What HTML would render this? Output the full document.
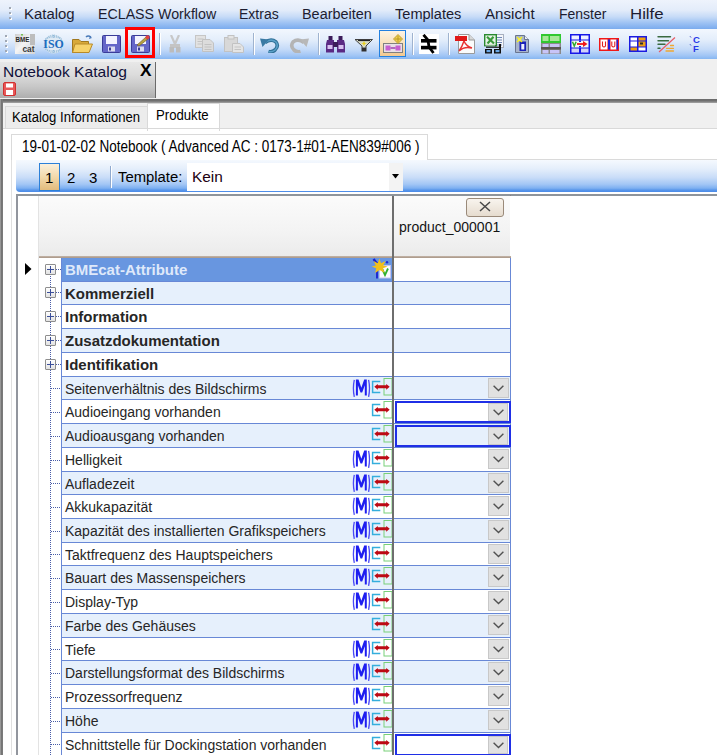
<!DOCTYPE html>
<html><head><meta charset="utf-8"><style>
html,body{margin:0;padding:0}
body{width:717px;height:755px;overflow:hidden;position:relative;background:#fff;font-family:"Liberation Sans",sans-serif;color:#000}
.a{position:absolute}
#menubar{position:absolute;left:0;top:0;width:717px;height:29px;background:linear-gradient(#eef3fc 0%,#e3ecfa 35%,#c6dbf7 58%,#9cc1f3 80%,#7aabee 100%)}
#toolbar{position:absolute;left:0;top:29px;width:717px;height:30px;background:linear-gradient(#f2f7fe 0%,#e4eefb 35%,#c4daf8 68%,#a2c6f5 88%,#86b6f2 100%)}
.mi{position:absolute;top:6px;transform-origin:0 0;font-size:14px;color:#1c1c30;white-space:nowrap;line-height:17px}
.grip{position:absolute;width:2px;height:2px;background:#a0a8b4;box-shadow:1px 1px 0 #fff}
.sep{position:absolute;top:33px;width:1px;height:22px;background:#9fb3cf;box-shadow:1px 0 0 #fff}
.ic{position:absolute}
#docstrip{position:absolute;left:0;top:59px;width:717px;height:40px;background:#f0f0f0}
#doctab{position:absolute;left:0;top:62px;width:155px;height:36px;background:linear-gradient(#e8e8e8 0%,#dcdcdc 35%,#c6c6c6 70%,#aeaeae 100%);border-right:1px solid #6a6a6a}
#darkline{position:absolute;left:0;top:99px;width:717px;height:4px;background:linear-gradient(#6a6a6a,#707070 45%,#8c8c8c 75%,#a8a8a8)}
#leftborder{position:absolute;left:0;top:99px;width:3px;height:656px;background:linear-gradient(90deg,#a8a8a8,#707070 55%,#808080)}
#tabstrip{position:absolute;left:3px;top:103px;width:714px;height:26px;background:#f0f0f0}
#tab1{position:absolute;left:5px;top:106px;width:141px;height:22px;background:#ececec;border:1px solid #d9d9d9;border-bottom:none}
#tab2{position:absolute;left:147px;top:103px;width:71px;height:27px;background:#fff;border:1px solid #d9d9d9;border-bottom:none}
#pageline{position:absolute;left:3px;top:128px;width:714px;height:1px;background:#d9d9d9}
.tt{position:absolute;font-size:14px;white-space:nowrap;line-height:16px;transform-origin:0 0}
#innerv{position:absolute;left:11px;top:134px;width:1px;height:621px;background:#e0e0e0}
#innertab{position:absolute;left:11px;top:134px;width:415px;height:25px;border:1px solid #dadada;border-bottom:none;background:#fff}
#innerline{position:absolute;left:427px;top:159px;width:290px;height:1px;background:#dadada}
#tb2{position:absolute;left:16px;top:160px;width:701px;height:32px;border-bottom-left-radius:4px;background:linear-gradient(#f5f9fe 0%,#e4eefb 28%,#c8dcf8 55%,#a2c6f5 76%,#7eb0f1 88%,#5896ea 94%,#4a8ae8 100%)}
#btn1{position:absolute;left:39px;top:163px;width:19px;height:26px;border:1.5px solid #2c80d8;background:linear-gradient(#fbf0dc,#f2d9aa 50%,#e2bb7c)}
#combo{position:absolute;left:187px;top:163px;width:216px;height:28px;background:#fff}
#combobtn{position:absolute;left:389px;top:163px;width:14px;height:28px;background:#f3f3f3}
#gridborder{position:absolute;left:16px;top:194px;width:701px;height:561px;border-left:2px solid #92969e;border-top:2px solid #8e949b;box-sizing:border-box}
#rhcol{position:absolute;left:18px;top:196px;width:20px;height:559px;background:#fff;border-right:1px solid #e3e3e3}
#hdr1{position:absolute;left:39px;top:196px;width:353px;height:60px;background:linear-gradient(#fbfbfb,#f3f3f3 60%,#ebebeb)}
#hdr2{position:absolute;left:394px;top:196px;width:116px;height:60px;background:linear-gradient(#fbfbfb,#f3f3f3 60%,#ebebeb)}
#hdrline{position:absolute;left:39px;top:256px;width:472px;height:2px;background:linear-gradient(#c4b6aa,#a89585)}
#closebtn{position:absolute;left:466px;top:198px;width:36px;height:17px;border:1px solid #9a8a7a;border-radius:3px;background:linear-gradient(#f8f4ee,#e6dccf)}
.row{position:absolute;left:0;width:717px}
.pbox{position:absolute;left:45px;width:9px;height:9px;border:1px solid #8e8e8e;border-radius:1px;background:linear-gradient(#ffffff,#e2e2e2)}
.pbox:before{content:"";position:absolute;left:1px;top:4px;width:7px;height:1px;background:#3b4f9a}
.pbox:after{content:"";position:absolute;left:4px;top:1px;width:1px;height:7px;background:#3b4f9a}
.hdot{position:absolute;left:56px;width:5px;height:1px;background:repeating-linear-gradient(90deg,#4a5da8 0 1px,transparent 1px 2px)}
.hdot2{position:absolute;left:51px;width:10px;height:1px;background:repeating-linear-gradient(90deg,#4a5da8 0 1px,transparent 1px 2px)}
.treev{position:absolute;left:50px;width:1px;background:repeating-linear-gradient(#4a5da8 0 1px,transparent 1px 2px)}
.lc{position:absolute;left:61px;top:0;width:331px;height:100%;box-sizing:border-box;border-left:1px solid #6888d6;border-bottom:1px solid #6888d6}
.vc{position:absolute;left:394px;top:0;width:117px;height:100%;box-sizing:border-box;border-right:1px solid #6888d6;border-bottom:1px solid #6888d6}
.lab{position:absolute;left:3px;top:3.5px;font-size:14px;line-height:17px;white-space:nowrap;color:#262626}
.lab.b{font-weight:bold;font-size:14px;top:4px;transform:scaleX(1.07);transform-origin:0 0}
.divider{position:absolute;left:392px;top:196px;width:2px;height:559px;background:#6e6e6e}
.micon{position:absolute;left:290px;top:3px;width:19px;height:16px;color:#1a1aff;font-weight:bold;font-size:14px;line-height:16px;text-align:center}
.cyb{position:absolute;left:310px;top:4px;width:7px;height:9px;border:1.5px solid #2ba0d8;border-right:none}
.grb{position:absolute;left:321px;top:1px;width:7px;height:15px;border:1px solid #58c050;border-left:none}
.arr{position:absolute;left:312px;top:6px;width:15px;height:4px;background:#c8102e}
.ddb{position:absolute;left:94px;top:1px;width:21px;height:20px;box-sizing:border-box;border:1px solid #c8c8c8;background:#e1e1e1;display:flex;align-items:center;justify-content:center}
.combo{position:absolute;left:1px;top:1px;width:116px;height:22px;box-sizing:border-box;border:2px solid #1f2fe6;background:transparent}
.bmeicon{position:absolute;left:301px;top:2px;width:24px;height:20px}

.icg{position:absolute;left:290px;top:0}

</style></head><body>
<div id="menubar"></div>
<div id="toolbar"></div>
<div class="grip" style="left:9px;top:7px"></div><div class="grip" style="left:9px;top:12px"></div><div class="grip" style="left:9px;top:17px"></div>
<div class="mi" style="left:24px;transform:scaleX(1.066)">Katalog</div>
<div class="mi" style="left:98px;transform:scaleX(1.015)">ECLASS Workflow</div>
<div class="mi" style="left:239px">Extras</div>
<div class="mi" style="left:302px;transform:scaleX(1.03)">Bearbeiten</div>
<div class="mi" style="left:395px;transform:scaleX(1.04)">Templates</div>
<div class="mi" style="left:485px;transform:scaleX(1.08)">Ansicht</div>
<div class="mi" style="left:559px">Fenster</div>
<div class="mi" style="left:630px;transform:scaleX(1.2)">Hilfe</div>
<div class="grip" style="left:5px;top:35px"></div><div class="grip" style="left:5px;top:40px"></div><div class="grip" style="left:5px;top:45px"></div><div class="grip" style="left:5px;top:50px"></div>
<div id="docstrip"></div>
<div id="doctab"></div>
<div class="tt" style="left:3px;top:63px;font-size:15px;line-height:17px;color:#10103a;transform:scaleX(1.04)">Notebook Katalog</div>
<div class="tt" style="left:140px;top:62px;font-size:16px;font-weight:bold;line-height:18px;transform:scaleX(1.08)">X</div>
<div id="darkline"></div>
<div id="leftborder"></div>
<div id="tabstrip"></div>
<div id="tab1"></div>
<div id="tab2"></div>
<div id="pageline"></div>
<div class="tt" style="left:12px;top:109px;transform:scaleX(0.935)">Katalog Informationen</div>
<div class="tt" style="left:156px;top:107px;transform:scaleX(0.94)">Produkte</div>
<div id="innerv"></div>
<div id="innertab"></div>
<div id="innerline"></div>
<div class="tt" style="left:22px;top:138px;font-size:16px;line-height:18px;transform:scaleX(0.845)">19-01-02-02 Notebook ( Advanced AC : 0173-1#01-AEN839#006 )</div>
<div id="tb2"></div>
<div id="btn1"></div>
<div class="tt" style="left:45px;top:169px;font-size:15px;line-height:17px">1</div>
<div class="tt" style="left:67px;top:169px;font-size:15px;line-height:17px">2</div>
<div class="tt" style="left:89px;top:169px;font-size:15px;line-height:17px">3</div>
<div class="a" style="left:110px;top:166px;width:1px;height:22px;background:#8fa9cf;box-shadow:1px 0 0 #fff"></div>
<div class="tt" style="left:118px;top:169px;font-size:14px;transform:scaleX(1.06)">Template:</div>
<div id="combo"></div>
<div id="combobtn"></div>
<div class="tt" style="left:192px;top:169px;font-size:14px;color:#200010;transform:scaleX(1.1)">Kein</div>
<svg class="a" style="left:392px;top:174px" width="8" height="5"><path d="M0 0H7L3.5 4.5Z" fill="#000"/></svg>
<div id="gridborder"></div>
<div id="rhcol"></div>
<div id="hdr1"></div>
<div id="hdr2"></div>
<div id="hdrline"></div>
<div id="closebtn"></div>
<svg class="a" style="left:479px;top:201px" width="12" height="11"><path d="M1 1L11 10M11 1L1 10" stroke="#484848" stroke-width="1.5"/></svg><div class="a" style="left:510px;top:195px;width:1px;height:1px;background:#8a8080"></div>
<div class="tt" style="left:399px;top:219px;font-size:14px;color:#141414">product_000001</div>
<svg class="a" style="left:25px;top:263px" width="7" height="12"><path d="M0 0L6.5 6L0 12Z" fill="#000"/></svg>
<!-- BMEcat -->
<svg class="a" style="left:15px;top:34px" width="20" height="20" viewBox="0 0 20 20">
<defs><linearGradient id="bmeg" x1="0" y1="0" x2="1" y2="1"><stop offset="0" stop-color="#cfcfcf"/><stop offset="0.45" stop-color="#f4f4f4"/><stop offset="1" stop-color="#d4d4d4"/></linearGradient></defs>
<rect x="0" y="0" width="20" height="20" fill="url(#bmeg)"/>
<rect x="15" y="0" width="5" height="11" fill="#bdbdbd"/>
<text x="0.5" y="7.5" font-family="Liberation Sans" font-weight="bold" font-size="7.5" fill="#2a2a2a" textLength="14" lengthAdjust="spacingAndGlyphs">BME</text>
<path d="M3 19 L15 9 L14 19Z" fill="#e4eaf0"/>
<text x="7.5" y="18" font-family="Liberation Sans" font-weight="bold" font-size="8.5" fill="#383838" textLength="12" lengthAdjust="spacingAndGlyphs">cat</text>
<circle cx="7" cy="0.8" r="1" fill="#70c050"/>
</svg>
<!-- ISO -->
<svg class="a" style="left:43px;top:34px" width="21" height="20" viewBox="0 0 21 20">
<ellipse cx="10.5" cy="10" rx="9.8" ry="9.6" fill="#dfeaf4"/>
<ellipse cx="10.5" cy="10" rx="9" ry="8.8" fill="none" stroke="#a8c8e0" stroke-width="1.2" stroke-dasharray="1.2 0.8"/>
<path d="M2.5 5 Q10.5 0.5 18.5 5 M2.5 15 Q10.5 19.5 18.5 15 M10.5 1 V4 M10.5 16 V19" fill="none" stroke="#90b8d8" stroke-width="1.3" stroke-dasharray="1 0.8"/>
<text x="0.3" y="14.2" font-family="Liberation Serif" font-weight="bold" font-size="12.5" fill="#1a6cc0" textLength="20.4" lengthAdjust="spacingAndGlyphs">ISO</text>
</svg>
<!-- folder -->
<svg class="a" style="left:72px;top:35px" width="21" height="18" viewBox="0 0 21 18">
<path d="M14 2 Q16 0 19 2" fill="none" stroke="#4a7ab8" stroke-width="1.5"/><path d="M18 1 L20 3 L17 4Z" fill="#4a7ab8"/>
<path d="M0.5 4.5 H7 L9 6.5 H16.5 V17.5 H0.5Z" fill="#d8a93a" stroke="#a07820" stroke-width="1"/>
<path d="M3 9 H20.5 L17 17.5 H0.5Z" fill="#f6d26a" stroke="#b88a28" stroke-width="1"/>
</svg>
<!-- save -->
<svg class="a" style="left:102px;top:35px" width="19" height="18" viewBox="0 0 19 18">
<rect x="0.5" y="0.5" width="18" height="17" rx="1" fill="#6466c8" stroke="#3a3c98"/>
<rect x="4" y="1" width="11" height="8" fill="#f4f4ff"/>
<rect x="6" y="11.5" width="7" height="5" fill="#dcdcf0"/><rect x="7" y="12.5" width="2" height="3" fill="#3a3c98"/>
</svg>
<!-- red highlight box -->
<div class="a" style="left:125px;top:27px;width:24px;height:25px;border:3px solid #ff0000"></div>
<!-- save edit -->
<svg class="a" style="left:131px;top:35px" width="19" height="18" viewBox="0 0 19 18">
<rect x="0.5" y="0.5" width="18" height="17" rx="1" fill="#6466c8" stroke="#3a3c98"/>
<rect x="4" y="1" width="11" height="8" fill="#f4f4ff"/>
<rect x="6" y="11.5" width="7" height="5" fill="#dcdcf0"/><rect x="7" y="12.5" width="2" height="3" fill="#3a3c98"/>
<path d="M6 10 L15 2 L17 4 L8 11Z" fill="#b8a040" stroke="#6a5a20" stroke-width="0.6"/>
<circle cx="16.5" cy="2.2" r="2" fill="#e04040"/>
</svg>
<div class="sep" style="left:159px"></div>
<!-- cut gray -->
<svg class="a" style="left:169px;top:35px" width="12" height="18" viewBox="0 0 12 18">
<path d="M2 0 L6 9 L10 0" fill="none" stroke="#c8c8c8" stroke-width="2.2"/>
<rect x="1" y="9" width="10" height="4" fill="#c4c4c4"/>
<rect x="0.5" y="12" width="4.5" height="5.5" fill="#bcbcbc"/><rect x="7" y="12" width="4.5" height="5.5" fill="#bcbcbc"/>
</svg>
<!-- copy gray -->
<svg class="a" style="left:195px;top:35px" width="19" height="17" viewBox="0 0 19 17">
<rect x="0.5" y="0.5" width="10" height="12" fill="#e2e2e2" stroke="#c6c6c6"/>
<path d="M2.5 4H8.5M2.5 6.5H8.5M2.5 9H8.5" stroke="#c4c4c4"/>
<path d="M7.5 4.5 H15 L18.5 8 V16.5 H7.5Z" fill="#dcdcdc" stroke="#c2c2c2"/>
<path d="M9.5 9.5H16.5M9.5 12H16.5M9.5 14.5H16.5" stroke="#c2c2c2"/>
</svg>
<!-- paste gray -->
<svg class="a" style="left:224px;top:35px" width="20" height="18" viewBox="0 0 20 18">
<rect x="0.5" y="2.5" width="13" height="14" fill="#d8d8d8" stroke="#c2c2c2"/>
<rect x="4" y="0.5" width="6" height="3.5" fill="#e4e4e4" stroke="#c2c2c2"/>
<path d="M8.5 8.5 H16 L19.5 12 V17.5 H8.5Z" fill="#e4e4e4" stroke="#c2c2c2"/>
<path d="M10.5 12H17M10.5 14.5H17" stroke="#c4c4c4"/>
</svg>
<div class="sep" style="left:253px"></div>
<!-- undo -->
<svg class="a" style="left:260px;top:36px" width="20" height="17" viewBox="0 0 20 17">
<path d="M5 6.5 Q11 2 16 6 Q19 10 15 14 Q12 16.5 8.5 15.5" fill="none" stroke="#2f6f96" stroke-width="3.6"/>
<path d="M5 6.5 Q11 2 16 6 Q19 10 15 14 Q12 16.5 8.5 15.5" fill="none" stroke="#5aa0c8" stroke-width="1.6"/>
<path d="M0 2.5 L9 3.5 L2.5 11Z" fill="#3a7aa4"/>
</svg>
<!-- redo gray -->
<svg class="a" style="left:288px;top:36px" width="21" height="17" viewBox="0 0 21 17">
<path d="M16 6.5 Q10 2 5 6 Q2 10 6 14 Q9 16.5 12.5 15.5" fill="none" stroke="#b4b4b4" stroke-width="3.6"/>
<path d="M21 2.5 L12 3.5 L18.5 11Z" fill="#b8b8b8"/>
</svg>
<div class="sep" style="left:318px"></div>
<!-- binoculars -->
<svg class="a" style="left:326px;top:36px" width="19" height="17" viewBox="0 0 19 17">
<rect x="2.5" y="0" width="4" height="4" fill="#3c1c5a"/><rect x="12.5" y="0" width="4" height="4" fill="#3c1c5a"/>
<path d="M1 4 H8 V16.5 H0 V8Z" fill="#5a2a84"/><path d="M11 4 H18 L19 8 V16.5 H11Z" fill="#5a2a84"/>
<rect x="7" y="6" width="5" height="5" fill="#3c1c5a"/>
<rect x="1.5" y="9" width="5" height="4" fill="#d8c0f0"/><rect x="12.5" y="9" width="5" height="4" fill="#d8c0f0"/>
</svg>
<!-- funnel -->
<svg class="a" style="left:355px;top:39px" width="18" height="13" viewBox="0 0 18 13">
<path d="M0 0.5 H17.5 L11 7 V9 H7 V7Z" fill="#d8dcc8" stroke="#404040" stroke-width="1"/>
<path d="M3 1.5 H15" stroke="#202020" stroke-width="1.2"/>
<rect x="6.5" y="9" width="5" height="3.5" fill="#303030"/>
<path d="M9 2 L10 4 L12 4.5 L10 5 L9 7 L8 5 L6 4.5 L8 4Z" fill="#e8d020"/>
</svg>
<!-- highlighted button -->
<div class="a" style="left:379px;top:30px;width:25px;height:25px;border:1.5px solid #2280e0;background:linear-gradient(#fdf4e4,#f8ddb4 60%,#f2c890)"></div>
<svg class="a" style="left:383px;top:34px" width="20" height="19" viewBox="0 0 20 19">
<rect x="0.5" y="9.5" width="19" height="9" fill="#e8e0e8" stroke="#808080"/>
<rect x="2.5" y="11.5" width="5" height="5" fill="#c860d0"/><rect x="12.5" y="11.5" width="5" height="5" fill="#c860d0"/>
<path d="M7.5 14H12.5" stroke="#a040b0" stroke-width="1.5"/>
<path d="M15 0.5 L19.5 5 L15 9.5 L10.5 5Z" fill="#f0d050" stroke="#b09020" stroke-width="0.8"/>
<path d="M15 2V8M12 5H18" stroke="#b09020" stroke-width="0.8"/>
</svg>
<div class="sep" style="left:412px"></div>
<!-- neq icon -->
<svg class="a" style="left:419px;top:34px" width="20" height="20" viewBox="0 0 20 20">
<rect width="20" height="20" fill="#fff"/>
<rect x="2" y="5" width="15.5" height="3.6" fill="#000"/><rect x="2" y="11.8" width="15.5" height="3.6" fill="#000"/>
<path d="M4.5 0.8 L9 6 L10 13 L14.5 19" fill="none" stroke="#000" stroke-width="2.8"/>
</svg>
<div class="sep" style="left:448px"></div>
<!-- pdf -->
<svg class="a" style="left:455px;top:34px" width="20" height="20" viewBox="0 0 20 20">
<path d="M3.5 0.5 H14 L19.5 6 V19.5 H3.5Z" fill="#fbfbfb" stroke="#9a9a9a"/>
<path d="M14 0.5 V6 H19.5" fill="#d8d8d8" stroke="#9a9a9a"/>
<rect x="0" y="2" width="12" height="5" fill="#e01818"/>
<path d="M9 7 Q7 13 4 17 Q9 12 17 14 Q11 12 9 7" fill="none" stroke="#e83030" stroke-width="1.4"/>
</svg>
<!-- excel -->
<svg class="a" style="left:484px;top:34px" width="20" height="20" viewBox="0 0 20 20">
<rect x="11.5" y="0.5" width="8" height="13" fill="#f4f6fa" stroke="#a8b0c0"/>
<path d="M13 3.5H18M13 6H18M13 8.5H18M13 11H18" stroke="#7088b8"/>
<rect x="0.7" y="0.7" width="11.6" height="11" fill="#e8f4e8" stroke="#2a8a30" stroke-width="1.4"/>
<path d="M3 2.8 L10 9.5 M9.5 2.8 L3.5 9.5" stroke="#3a9a3a" stroke-width="2.2"/>
<path d="M1.5 11 H11" stroke="#c8d8c8" stroke-width="1.2"/>
<path d="M2 13.2 H16" stroke="#101010" stroke-width="1.2"/><rect x="15" y="10" width="2" height="9" fill="#101010"/>
<rect x="1" y="15" width="7" height="4.5" fill="#101010"/><rect x="10" y="15" width="7" height="4.5" fill="#101010"/>
<rect x="2.5" y="16" width="4" height="2.2" fill="#6aa8e8"/><rect x="11.5" y="16" width="4" height="2.2" fill="#6aa8e8"/>
</svg>
<!-- blue doc -->
<svg class="a" style="left:514px;top:35px" width="16" height="19" viewBox="0 0 16 19">
<path d="M1.5 0.5 H10.5 L14.5 4.5 V17.5 H1.5Z" fill="#a8b4cc" stroke="#6a7690"/>
<path d="M10.5 0.5 V4.5 H14.5" fill="#e8ecf4" stroke="#6a7690"/>
<rect x="5.5" y="6.5" width="6.5" height="9.5" fill="#1a22b8"/><rect x="7.3" y="9" width="3" height="5.5" fill="#f0f2ff"/>
<path d="M3 2 L8 7 M8 2 L3 7" stroke="#f2f020" stroke-width="1.5"/><circle cx="5.5" cy="4.5" r="1.6" fill="#f8f040"/>
</svg>
<!-- green table -->
<svg class="a" style="left:541px;top:34px" width="20" height="20" viewBox="0 0 20 20">
<rect width="20" height="20" fill="#8a8a8a"/>
<rect x="0" y="0" width="20" height="9" fill="#30c830"/>
<rect x="1.5" y="2" width="6" height="5" fill="#a8e898"/><rect x="9" y="2" width="9.5" height="5" fill="#a8e898"/>
<rect x="1.5" y="10" width="6" height="3" fill="#c8c4f4"/><rect x="9" y="10" width="9.5" height="3" fill="#c8c4f4"/>
<rect x="0" y="13" width="20" height="2.5" fill="#5a5652"/>
<rect x="1.5" y="16" width="6" height="3.5" fill="#c8c4f8"/><rect x="9" y="16" width="9.5" height="3.5" fill="#c8c4f8"/>
</svg>
<!-- blue v-arrow table -->
<svg class="a" style="left:570px;top:34px" width="20" height="20" viewBox="0 0 20 20">
<rect x="0" y="0" width="20" height="20" fill="#1818e8"/>
<rect x="1.5" y="1.5" width="7.5" height="4" fill="#f0f0ff"/><rect x="11" y="1.5" width="7.5" height="4" fill="#f0f0ff"/>
<rect x="1.5" y="6.5" width="17" height="7" fill="#f4faf4"/><rect x="9" y="6.5" width="2" height="1.5" fill="#1818e8"/><rect x="9" y="12" width="2" height="1.5" fill="#1818e8"/>
<rect x="1.5" y="14.5" width="7.5" height="4" fill="#d0d0f8"/><rect x="11" y="14.5" width="7.5" height="4" fill="#d0d0f8"/>
<path d="M2.5 7.8 L4.3 12 L6.1 7.8" fill="none" stroke="#30a830" stroke-width="1.5"/>
<path d="M7 10H14" stroke="#f01818" stroke-width="1.8"/><path d="M13 7 L17.5 10 L13 13Z" fill="#f01818"/>
</svg>
<!-- red UU -->
<svg class="a" style="left:599px;top:38px" width="20" height="13" viewBox="0 0 20 13">
<rect width="20" height="13" fill="#f01818"/>
<rect x="1.5" y="1.5" width="7" height="10" fill="#fff"/><rect x="11.5" y="1.5" width="6" height="10" fill="#fff"/>
<rect x="9" y="1.5" width="2" height="10" fill="#2020e0"/><rect x="17.5" y="1.5" width="1.5" height="10" fill="#2020e0"/>
<path d="M3.5 3.5 V8 Q5 10 6.5 8 V3.5" fill="none" stroke="#e02020" stroke-width="1.1"/>
<path d="M12.8 3.5 V8 Q14.3 10 15.8 8 V3.5" fill="none" stroke="#e02020" stroke-width="1.1"/>
</svg>
<!-- blue/orange table -->
<svg class="a" style="left:629px;top:36px" width="18" height="16" viewBox="0 0 18 16">
<rect width="18" height="16" fill="#1a1ae0"/>
<rect x="1.5" y="1.5" width="6.5" height="3" fill="#fff"/><rect x="9.5" y="1.5" width="7" height="3" fill="#f0a010"/>
<rect x="1.5" y="5.5" width="6.5" height="5" fill="#fff"/><rect x="9.5" y="5.5" width="7" height="5" fill="#f0a010"/>
<rect x="11" y="6.5" width="3" height="2" fill="#303030"/>
<rect x="1.5" y="11.5" width="6.5" height="3" fill="#f0a010"/><rect x="9.5" y="11.5" width="7" height="3" fill="#fff"/>
</svg>
<!-- lines icon -->
<svg class="a" style="left:657px;top:35px" width="19" height="18" viewBox="0 0 19 18">
<path d="M1 1.8H13.5M1 5.8H11.5M1 9.3H8M1 13.3H3" stroke="#3a6a40" stroke-width="1.4" stroke-linecap="round"/>
<path d="M13.5 10.5H16.5M9.5 13.3H16.5M9 16H16.5" stroke="#f0a830" stroke-width="1.3" stroke-linecap="round"/>
<path d="M2 17 L18 2.5" stroke="#e85a64" stroke-width="1.2"/>
</svg>
<!-- C/F -->
<svg class="a" style="left:689px;top:35px" width="12" height="18" viewBox="0 0 12 18">
<path d="M1 1.2 L2 2.5 M1 9.2 L2 10.5" stroke="#3040c0" stroke-width="0.9"/>
<text x="4" y="8" font-family="Liberation Sans" font-weight="bold" font-size="9.5" fill="#2838e8">C</text>
<text x="4" y="17" font-family="Liberation Sans" font-weight="bold" font-size="9.5" fill="#2838e8">F</text>
</svg>
<!-- doc tab save icon -->
<svg class="a" style="left:3px;top:82px" width="13" height="14" viewBox="0 0 13 14">
<rect x="0.5" y="0.5" width="12" height="13" rx="1.5" fill="#e85858" stroke="#d03030"/>
<rect x="3" y="1.5" width="7" height="4" fill="#fff"/><rect x="3" y="8" width="7" height="5" fill="#fff"/>
</svg>

<div class="treev" style="top:274px;height:481px"></div>
<div id="rows"><div class="row" style="top:258px;height:24px"><div class="pbox" style="top:6px"></div><div class="hdot" style="top:11px"></div><div class="lc" style="background:#6896e0"><span class="lab b" style="color:#dfe9fa">BMEcat-Attribute</span><svg class="icg" style="left:300px" width="31" height="22" viewBox="0 0 31 22"><path d="M11.5 1 L15 5.5" stroke="#1a20d0" stroke-width="2.4"/><rect x="17.5" y="7.5" width="11" height="12.5" fill="#fbfbff" stroke="#c4c4f0" stroke-width="1"/><path d="M20 10.5 L23 17 L26 10.5" fill="none" stroke="#30b030" stroke-width="1.8"/><circle cx="25" cy="4.3" r="1.2" fill="#1a2ad8"/><path d="M15 12.5 V20.5" stroke="#1a20d0" stroke-width="1.8"/><path d="M17.4 0.6 L19 5.2 L23.6 3 L21.2 7.4 L25.6 8.6 L21 10.2 L22.4 14.8 L17.6 12 L13.2 15 L14.2 10.2 L9.6 8.6 L13.8 7.4 L11.6 3 L15.8 5.2Z" fill="#f2c01a"/></svg></div><div class="vc" style="background:#ffffff"></div></div><div class="row" style="top:282px;height:23px"><div class="pbox" style="top:5px"></div><div class="hdot" style="top:10px"></div><div class="lc" style="background:#e6f0fc"><span class="lab b">Kommerziell</span></div><div class="vc" style="background:#e6f0fc"></div></div><div class="row" style="top:305px;height:24px"><div class="pbox" style="top:6px"></div><div class="hdot" style="top:11px"></div><div class="lc" style="background:#ffffff"><span class="lab b">Information</span></div><div class="vc" style="background:#ffffff"></div></div><div class="row" style="top:329px;height:24px"><div class="pbox" style="top:6px"></div><div class="hdot" style="top:11px"></div><div class="lc" style="background:#e6f0fc"><span class="lab b">Zusatzdokumentation</span></div><div class="vc" style="background:#e6f0fc"></div></div><div class="row" style="top:353px;height:24px"><div class="pbox" style="top:6px"></div><div class="hdot" style="top:11px"></div><div class="lc" style="background:#ffffff"><span class="lab b">Identifikation</span></div><div class="vc" style="background:#ffffff"></div></div><div class="row" style="top:377px;height:23px"><div class="hdot2" style="top:11px"></div><div class="lc" style="background:#e6f0fc"><span class="lab">Seitenverhältnis des Bildschirms</span><svg class="icg" width="41" height="22" viewBox="0 0 41 22"><path d="M2.3 2.8 Q0.5 11.3 2.3 19.8 M16.6 2.8 Q18.4 11.3 16.6 19.8" fill="none" stroke="#4848f6" stroke-width="1.3"/><path d="M3.9 18.6 V2.6 H6.5 L9.35 10.8 L12.2 2.6 H14.8 V18.6 H12.8 V8.2 L10.2 15.6 H8.5 L5.9 8.2 V18.6Z" fill="#1e1ef0"/><path d="M28.3 4.6 H20.6 V15.6 H28.3" fill="none" stroke="#34aedc" stroke-width="1.5"/><rect x="32" y="1.5" width="8" height="16.5" fill="none" stroke="#78d078" stroke-width="1"/><path d="M22.3 9.8 L25.8 6.9 V8.3 H34.2 V6.9 L37.7 9.8 L34.2 12.7 V11.3 H25.8 V12.7Z" fill="#bc0a14"/></svg></div><div class="vc" style="background:#e6f0fc"><div class="ddb"><svg width="11" height="7" viewBox="0 0 11 7"><path d="M0.6 0.8 L5.5 5.6 L10.4 0.8" fill="none" stroke="#525252" stroke-width="1.4"/></svg></div></div></div><div class="row" style="top:400px;height:24px"><div class="hdot2" style="top:12px"></div><div class="lc" style="background:#ffffff"><span class="lab">Audioeingang vorhanden</span><svg class="icg" width="41" height="22" viewBox="0 0 41 22"><path d="M28.3 4.6 H20.6 V15.6 H28.3" fill="none" stroke="#34aedc" stroke-width="1.5"/><rect x="32" y="1.5" width="8" height="16.5" fill="none" stroke="#78d078" stroke-width="1"/><path d="M22.3 9.8 L25.8 6.9 V8.3 H34.2 V6.9 L37.7 9.8 L34.2 12.7 V11.3 H25.8 V12.7Z" fill="#bc0a14"/></svg></div><div class="vc" style="background:#ffffff"><div class="combo"></div><div class="ddb" style="top:3px;height:18px;width:20px"><svg width="11" height="7" viewBox="0 0 11 7"><path d="M0.6 0.8 L5.5 5.6 L10.4 0.8" fill="none" stroke="#525252" stroke-width="1.4"/></svg></div></div></div><div class="row" style="top:424px;height:24px"><div class="hdot2" style="top:12px"></div><div class="lc" style="background:#e6f0fc"><span class="lab">Audioausgang vorhanden</span><svg class="icg" width="41" height="22" viewBox="0 0 41 22"><path d="M28.3 4.6 H20.6 V15.6 H28.3" fill="none" stroke="#34aedc" stroke-width="1.5"/><rect x="32" y="1.5" width="8" height="16.5" fill="none" stroke="#78d078" stroke-width="1"/><path d="M22.3 9.8 L25.8 6.9 V8.3 H34.2 V6.9 L37.7 9.8 L34.2 12.7 V11.3 H25.8 V12.7Z" fill="#bc0a14"/></svg></div><div class="vc" style="background:#e6f0fc"><div class="combo"></div><div class="ddb" style="top:3px;height:18px;width:20px"><svg width="11" height="7" viewBox="0 0 11 7"><path d="M0.6 0.8 L5.5 5.6 L10.4 0.8" fill="none" stroke="#525252" stroke-width="1.4"/></svg></div></div></div><div class="row" style="top:448px;height:24px"><div class="hdot2" style="top:12px"></div><div class="lc" style="background:#ffffff"><span class="lab">Helligkeit</span><svg class="icg" width="41" height="22" viewBox="0 0 41 22"><path d="M2.3 2.8 Q0.5 11.3 2.3 19.8 M16.6 2.8 Q18.4 11.3 16.6 19.8" fill="none" stroke="#4848f6" stroke-width="1.3"/><path d="M3.9 18.6 V2.6 H6.5 L9.35 10.8 L12.2 2.6 H14.8 V18.6 H12.8 V8.2 L10.2 15.6 H8.5 L5.9 8.2 V18.6Z" fill="#1e1ef0"/><path d="M28.3 4.6 H20.6 V15.6 H28.3" fill="none" stroke="#34aedc" stroke-width="1.5"/><rect x="32" y="1.5" width="8" height="16.5" fill="none" stroke="#78d078" stroke-width="1"/><path d="M22.3 9.8 L25.8 6.9 V8.3 H34.2 V6.9 L37.7 9.8 L34.2 12.7 V11.3 H25.8 V12.7Z" fill="#bc0a14"/></svg></div><div class="vc" style="background:#ffffff"><div class="ddb"><svg width="11" height="7" viewBox="0 0 11 7"><path d="M0.6 0.8 L5.5 5.6 L10.4 0.8" fill="none" stroke="#525252" stroke-width="1.4"/></svg></div></div></div><div class="row" style="top:472px;height:23px"><div class="hdot2" style="top:11px"></div><div class="lc" style="background:#e6f0fc"><span class="lab">Aufladezeit</span><svg class="icg" width="41" height="22" viewBox="0 0 41 22"><path d="M2.3 2.8 Q0.5 11.3 2.3 19.8 M16.6 2.8 Q18.4 11.3 16.6 19.8" fill="none" stroke="#4848f6" stroke-width="1.3"/><path d="M3.9 18.6 V2.6 H6.5 L9.35 10.8 L12.2 2.6 H14.8 V18.6 H12.8 V8.2 L10.2 15.6 H8.5 L5.9 8.2 V18.6Z" fill="#1e1ef0"/><path d="M28.3 4.6 H20.6 V15.6 H28.3" fill="none" stroke="#34aedc" stroke-width="1.5"/><rect x="32" y="1.5" width="8" height="16.5" fill="none" stroke="#78d078" stroke-width="1"/><path d="M22.3 9.8 L25.8 6.9 V8.3 H34.2 V6.9 L37.7 9.8 L34.2 12.7 V11.3 H25.8 V12.7Z" fill="#bc0a14"/></svg></div><div class="vc" style="background:#e6f0fc"><div class="ddb"><svg width="11" height="7" viewBox="0 0 11 7"><path d="M0.6 0.8 L5.5 5.6 L10.4 0.8" fill="none" stroke="#525252" stroke-width="1.4"/></svg></div></div></div><div class="row" style="top:495px;height:24px"><div class="hdot2" style="top:12px"></div><div class="lc" style="background:#ffffff"><span class="lab">Akkukapazität</span><svg class="icg" width="41" height="22" viewBox="0 0 41 22"><path d="M2.3 2.8 Q0.5 11.3 2.3 19.8 M16.6 2.8 Q18.4 11.3 16.6 19.8" fill="none" stroke="#4848f6" stroke-width="1.3"/><path d="M3.9 18.6 V2.6 H6.5 L9.35 10.8 L12.2 2.6 H14.8 V18.6 H12.8 V8.2 L10.2 15.6 H8.5 L5.9 8.2 V18.6Z" fill="#1e1ef0"/><path d="M28.3 4.6 H20.6 V15.6 H28.3" fill="none" stroke="#34aedc" stroke-width="1.5"/><rect x="32" y="1.5" width="8" height="16.5" fill="none" stroke="#78d078" stroke-width="1"/><path d="M22.3 9.8 L25.8 6.9 V8.3 H34.2 V6.9 L37.7 9.8 L34.2 12.7 V11.3 H25.8 V12.7Z" fill="#bc0a14"/></svg></div><div class="vc" style="background:#ffffff"><div class="ddb"><svg width="11" height="7" viewBox="0 0 11 7"><path d="M0.6 0.8 L5.5 5.6 L10.4 0.8" fill="none" stroke="#525252" stroke-width="1.4"/></svg></div></div></div><div class="row" style="top:519px;height:24px"><div class="hdot2" style="top:12px"></div><div class="lc" style="background:#e6f0fc"><span class="lab">Kapazität des installierten Grafikspeichers</span><svg class="icg" width="41" height="22" viewBox="0 0 41 22"><path d="M2.3 2.8 Q0.5 11.3 2.3 19.8 M16.6 2.8 Q18.4 11.3 16.6 19.8" fill="none" stroke="#4848f6" stroke-width="1.3"/><path d="M3.9 18.6 V2.6 H6.5 L9.35 10.8 L12.2 2.6 H14.8 V18.6 H12.8 V8.2 L10.2 15.6 H8.5 L5.9 8.2 V18.6Z" fill="#1e1ef0"/><path d="M28.3 4.6 H20.6 V15.6 H28.3" fill="none" stroke="#34aedc" stroke-width="1.5"/><rect x="32" y="1.5" width="8" height="16.5" fill="none" stroke="#78d078" stroke-width="1"/><path d="M22.3 9.8 L25.8 6.9 V8.3 H34.2 V6.9 L37.7 9.8 L34.2 12.7 V11.3 H25.8 V12.7Z" fill="#bc0a14"/></svg></div><div class="vc" style="background:#e6f0fc"><div class="ddb"><svg width="11" height="7" viewBox="0 0 11 7"><path d="M0.6 0.8 L5.5 5.6 L10.4 0.8" fill="none" stroke="#525252" stroke-width="1.4"/></svg></div></div></div><div class="row" style="top:543px;height:23px"><div class="hdot2" style="top:11px"></div><div class="lc" style="background:#ffffff"><span class="lab">Taktfrequenz des Hauptspeichers</span><svg class="icg" width="41" height="22" viewBox="0 0 41 22"><path d="M2.3 2.8 Q0.5 11.3 2.3 19.8 M16.6 2.8 Q18.4 11.3 16.6 19.8" fill="none" stroke="#4848f6" stroke-width="1.3"/><path d="M3.9 18.6 V2.6 H6.5 L9.35 10.8 L12.2 2.6 H14.8 V18.6 H12.8 V8.2 L10.2 15.6 H8.5 L5.9 8.2 V18.6Z" fill="#1e1ef0"/><path d="M28.3 4.6 H20.6 V15.6 H28.3" fill="none" stroke="#34aedc" stroke-width="1.5"/><rect x="32" y="1.5" width="8" height="16.5" fill="none" stroke="#78d078" stroke-width="1"/><path d="M22.3 9.8 L25.8 6.9 V8.3 H34.2 V6.9 L37.7 9.8 L34.2 12.7 V11.3 H25.8 V12.7Z" fill="#bc0a14"/></svg></div><div class="vc" style="background:#ffffff"><div class="ddb"><svg width="11" height="7" viewBox="0 0 11 7"><path d="M0.6 0.8 L5.5 5.6 L10.4 0.8" fill="none" stroke="#525252" stroke-width="1.4"/></svg></div></div></div><div class="row" style="top:566px;height:24px"><div class="hdot2" style="top:12px"></div><div class="lc" style="background:#e6f0fc"><span class="lab">Bauart des Massenspeichers</span><svg class="icg" width="41" height="22" viewBox="0 0 41 22"><path d="M2.3 2.8 Q0.5 11.3 2.3 19.8 M16.6 2.8 Q18.4 11.3 16.6 19.8" fill="none" stroke="#4848f6" stroke-width="1.3"/><path d="M3.9 18.6 V2.6 H6.5 L9.35 10.8 L12.2 2.6 H14.8 V18.6 H12.8 V8.2 L10.2 15.6 H8.5 L5.9 8.2 V18.6Z" fill="#1e1ef0"/><path d="M28.3 4.6 H20.6 V15.6 H28.3" fill="none" stroke="#34aedc" stroke-width="1.5"/><rect x="32" y="1.5" width="8" height="16.5" fill="none" stroke="#78d078" stroke-width="1"/><path d="M22.3 9.8 L25.8 6.9 V8.3 H34.2 V6.9 L37.7 9.8 L34.2 12.7 V11.3 H25.8 V12.7Z" fill="#bc0a14"/></svg></div><div class="vc" style="background:#e6f0fc"><div class="ddb"><svg width="11" height="7" viewBox="0 0 11 7"><path d="M0.6 0.8 L5.5 5.6 L10.4 0.8" fill="none" stroke="#525252" stroke-width="1.4"/></svg></div></div></div><div class="row" style="top:590px;height:24px"><div class="hdot2" style="top:12px"></div><div class="lc" style="background:#ffffff"><span class="lab">Display-Typ</span><svg class="icg" width="41" height="22" viewBox="0 0 41 22"><path d="M2.3 2.8 Q0.5 11.3 2.3 19.8 M16.6 2.8 Q18.4 11.3 16.6 19.8" fill="none" stroke="#4848f6" stroke-width="1.3"/><path d="M3.9 18.6 V2.6 H6.5 L9.35 10.8 L12.2 2.6 H14.8 V18.6 H12.8 V8.2 L10.2 15.6 H8.5 L5.9 8.2 V18.6Z" fill="#1e1ef0"/><path d="M28.3 4.6 H20.6 V15.6 H28.3" fill="none" stroke="#34aedc" stroke-width="1.5"/><rect x="32" y="1.5" width="8" height="16.5" fill="none" stroke="#78d078" stroke-width="1"/><path d="M22.3 9.8 L25.8 6.9 V8.3 H34.2 V6.9 L37.7 9.8 L34.2 12.7 V11.3 H25.8 V12.7Z" fill="#bc0a14"/></svg></div><div class="vc" style="background:#ffffff"><div class="ddb"><svg width="11" height="7" viewBox="0 0 11 7"><path d="M0.6 0.8 L5.5 5.6 L10.4 0.8" fill="none" stroke="#525252" stroke-width="1.4"/></svg></div></div></div><div class="row" style="top:614px;height:24px"><div class="hdot2" style="top:12px"></div><div class="lc" style="background:#e6f0fc"><span class="lab">Farbe des Gehäuses</span><svg class="icg" width="41" height="22" viewBox="0 0 41 22"><path d="M28.3 4.6 H20.6 V15.6 H28.3" fill="none" stroke="#34aedc" stroke-width="1.5"/><rect x="32" y="1.5" width="8" height="16.5" fill="none" stroke="#78d078" stroke-width="1"/><path d="M22.3 9.8 L25.8 6.9 V8.3 H34.2 V6.9 L37.7 9.8 L34.2 12.7 V11.3 H25.8 V12.7Z" fill="#bc0a14"/></svg></div><div class="vc" style="background:#e6f0fc"><div class="ddb"><svg width="11" height="7" viewBox="0 0 11 7"><path d="M0.6 0.8 L5.5 5.6 L10.4 0.8" fill="none" stroke="#525252" stroke-width="1.4"/></svg></div></div></div><div class="row" style="top:638px;height:23px"><div class="hdot2" style="top:11px"></div><div class="lc" style="background:#ffffff"><span class="lab">Tiefe</span><svg class="icg" width="41" height="22" viewBox="0 0 41 22"><path d="M2.3 2.8 Q0.5 11.3 2.3 19.8 M16.6 2.8 Q18.4 11.3 16.6 19.8" fill="none" stroke="#4848f6" stroke-width="1.3"/><path d="M3.9 18.6 V2.6 H6.5 L9.35 10.8 L12.2 2.6 H14.8 V18.6 H12.8 V8.2 L10.2 15.6 H8.5 L5.9 8.2 V18.6Z" fill="#1e1ef0"/><path d="M28.3 4.6 H20.6 V15.6 H28.3" fill="none" stroke="#34aedc" stroke-width="1.5"/><rect x="32" y="1.5" width="8" height="16.5" fill="none" stroke="#78d078" stroke-width="1"/><path d="M22.3 9.8 L25.8 6.9 V8.3 H34.2 V6.9 L37.7 9.8 L34.2 12.7 V11.3 H25.8 V12.7Z" fill="#bc0a14"/></svg></div><div class="vc" style="background:#ffffff"><div class="ddb"><svg width="11" height="7" viewBox="0 0 11 7"><path d="M0.6 0.8 L5.5 5.6 L10.4 0.8" fill="none" stroke="#525252" stroke-width="1.4"/></svg></div></div></div><div class="row" style="top:661px;height:24px"><div class="hdot2" style="top:12px"></div><div class="lc" style="background:#e6f0fc"><span class="lab">Darstellungsformat des Bildschirms</span><svg class="icg" width="41" height="22" viewBox="0 0 41 22"><path d="M2.3 2.8 Q0.5 11.3 2.3 19.8 M16.6 2.8 Q18.4 11.3 16.6 19.8" fill="none" stroke="#4848f6" stroke-width="1.3"/><path d="M3.9 18.6 V2.6 H6.5 L9.35 10.8 L12.2 2.6 H14.8 V18.6 H12.8 V8.2 L10.2 15.6 H8.5 L5.9 8.2 V18.6Z" fill="#1e1ef0"/><path d="M28.3 4.6 H20.6 V15.6 H28.3" fill="none" stroke="#34aedc" stroke-width="1.5"/><rect x="32" y="1.5" width="8" height="16.5" fill="none" stroke="#78d078" stroke-width="1"/><path d="M22.3 9.8 L25.8 6.9 V8.3 H34.2 V6.9 L37.7 9.8 L34.2 12.7 V11.3 H25.8 V12.7Z" fill="#bc0a14"/></svg></div><div class="vc" style="background:#e6f0fc"><div class="ddb"><svg width="11" height="7" viewBox="0 0 11 7"><path d="M0.6 0.8 L5.5 5.6 L10.4 0.8" fill="none" stroke="#525252" stroke-width="1.4"/></svg></div></div></div><div class="row" style="top:685px;height:24px"><div class="hdot2" style="top:12px"></div><div class="lc" style="background:#ffffff"><span class="lab">Prozessorfrequenz</span><svg class="icg" width="41" height="22" viewBox="0 0 41 22"><path d="M2.3 2.8 Q0.5 11.3 2.3 19.8 M16.6 2.8 Q18.4 11.3 16.6 19.8" fill="none" stroke="#4848f6" stroke-width="1.3"/><path d="M3.9 18.6 V2.6 H6.5 L9.35 10.8 L12.2 2.6 H14.8 V18.6 H12.8 V8.2 L10.2 15.6 H8.5 L5.9 8.2 V18.6Z" fill="#1e1ef0"/><path d="M28.3 4.6 H20.6 V15.6 H28.3" fill="none" stroke="#34aedc" stroke-width="1.5"/><rect x="32" y="1.5" width="8" height="16.5" fill="none" stroke="#78d078" stroke-width="1"/><path d="M22.3 9.8 L25.8 6.9 V8.3 H34.2 V6.9 L37.7 9.8 L34.2 12.7 V11.3 H25.8 V12.7Z" fill="#bc0a14"/></svg></div><div class="vc" style="background:#ffffff"><div class="ddb"><svg width="11" height="7" viewBox="0 0 11 7"><path d="M0.6 0.8 L5.5 5.6 L10.4 0.8" fill="none" stroke="#525252" stroke-width="1.4"/></svg></div></div></div><div class="row" style="top:709px;height:24px"><div class="hdot2" style="top:12px"></div><div class="lc" style="background:#e6f0fc"><span class="lab">Höhe</span><svg class="icg" width="41" height="22" viewBox="0 0 41 22"><path d="M2.3 2.8 Q0.5 11.3 2.3 19.8 M16.6 2.8 Q18.4 11.3 16.6 19.8" fill="none" stroke="#4848f6" stroke-width="1.3"/><path d="M3.9 18.6 V2.6 H6.5 L9.35 10.8 L12.2 2.6 H14.8 V18.6 H12.8 V8.2 L10.2 15.6 H8.5 L5.9 8.2 V18.6Z" fill="#1e1ef0"/><path d="M28.3 4.6 H20.6 V15.6 H28.3" fill="none" stroke="#34aedc" stroke-width="1.5"/><rect x="32" y="1.5" width="8" height="16.5" fill="none" stroke="#78d078" stroke-width="1"/><path d="M22.3 9.8 L25.8 6.9 V8.3 H34.2 V6.9 L37.7 9.8 L34.2 12.7 V11.3 H25.8 V12.7Z" fill="#bc0a14"/></svg></div><div class="vc" style="background:#e6f0fc"><div class="ddb"><svg width="11" height="7" viewBox="0 0 11 7"><path d="M0.6 0.8 L5.5 5.6 L10.4 0.8" fill="none" stroke="#525252" stroke-width="1.4"/></svg></div></div></div><div class="row" style="top:733px;height:23px"><div class="hdot2" style="top:11px"></div><div class="lc" style="background:#ffffff"><span class="lab">Schnittstelle für Dockingstation vorhanden</span><svg class="icg" width="41" height="22" viewBox="0 0 41 22"><path d="M28.3 4.6 H20.6 V15.6 H28.3" fill="none" stroke="#34aedc" stroke-width="1.5"/><rect x="32" y="1.5" width="8" height="16.5" fill="none" stroke="#78d078" stroke-width="1"/><path d="M22.3 9.8 L25.8 6.9 V8.3 H34.2 V6.9 L37.7 9.8 L34.2 12.7 V11.3 H25.8 V12.7Z" fill="#bc0a14"/></svg></div><div class="vc" style="background:#ffffff"><div class="combo"></div><div class="ddb" style="top:3px;height:18px;width:20px"><svg width="11" height="7" viewBox="0 0 11 7"><path d="M0.6 0.8 L5.5 5.6 L10.4 0.8" fill="none" stroke="#525252" stroke-width="1.4"/></svg></div></div></div></div>
<div class="divider"></div>
</body></html>
